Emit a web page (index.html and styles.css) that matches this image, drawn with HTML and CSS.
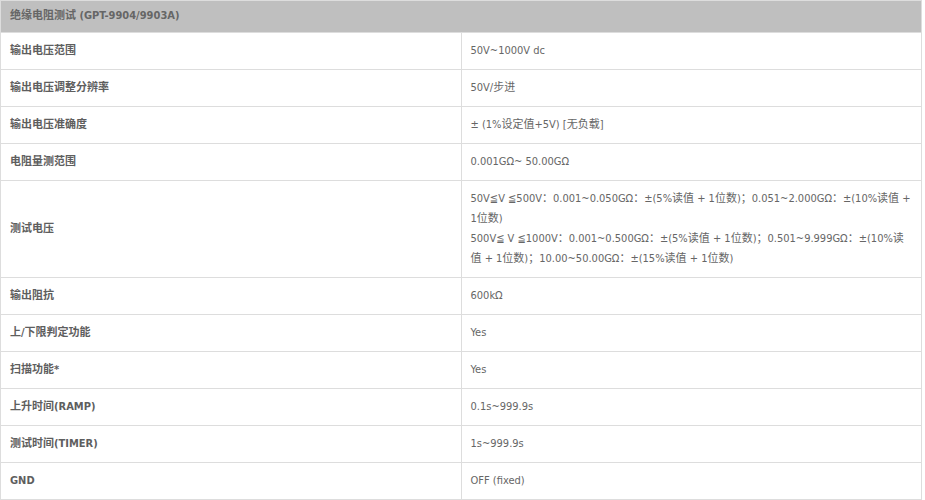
FILE: index.html
```html
<!DOCTYPE html>
<html lang="zh-CN">
<head>
<meta charset="utf-8">
<title>绝缘电阻测试</title>
<link rel="stylesheet" href="styles.css">
</head>
<body>
<table class="spec">
  <thead>
    <tr><th colspan="2" class="head">绝缘电阻测试 (GPT-9904/9903A)</th></tr>
  </thead>
  <tbody>
    <tr><td class="label">输出电压范围</td><td class="value">50V~1000V dc</td></tr>
    <tr><td class="label">输出电压调整分辨率</td><td class="value">50V/步进</td></tr>
    <tr><td class="label">输出电压准确度</td><td class="value">± (1%设定值+5V) [无负载]</td></tr>
    <tr><td class="label">电阻量测范围</td><td class="value">0.001GΩ~ 50.00GΩ</td></tr>
    <tr><td class="label">测试电压</td><td class="value">50V≦V ≦500V<span class="p">：</span>0.001~0.050GΩ<span class="p">：</span>±(5%读值 + 1位数)<span class="p">；</span>0.051~2.000GΩ<span class="p">：</span>±(10%读值 + 1位数)<br>500V≦ V ≦1000V<span class="p">：</span>0.001~0.500GΩ<span class="p">：</span>±(5%读值 + 1位数)<span class="p">；</span>0.501~9.999GΩ<span class="p">：</span>±(10%读值 + 1位数)<span class="p">；</span>10.00~50.00GΩ<span class="p">：</span>±(15%读值 + 1位数)</td></tr>
    <tr><td class="label">输出阻抗</td><td class="value">600kΩ</td></tr>
    <tr><td class="label">上/下限判定功能</td><td class="value">Yes</td></tr>
    <tr><td class="label">扫描功能*</td><td class="value">Yes</td></tr>
    <tr><td class="label">上升时间(RAMP)</td><td class="value">0.1s~999.9s</td></tr>
    <tr><td class="label">测试时间(TIMER)</td><td class="value">1s~999.9s</td></tr>
    <tr><td class="label">GND</td><td class="value">OFF (fixed)</td></tr>
  </tbody>
</table>
</body>
</html>
```
FILE: styles.css
```css
html, body {
  margin: 0;
  padding: 0;
  background: #ffffff;
}
body {
  font-family: "DejaVu Sans Condensed", "DejaVu Sans", "Noto Sans CJK SC", sans-serif;
  font-size: 11px;
  color: #666666;
}
.spec {
  width: 922px;
  border-collapse: collapse;
  table-layout: fixed;
}
.spec th,
.spec td {
  border: 1px solid #dddddd;
  line-height: 20px;
  text-align: left;
  vertical-align: middle;
}
.head {
  background: #bfbfbf;
  font-weight: bold;
  color: #666666;
  padding: 5px 9px 6px;
  border-color: #bfbfbf #dddddd #dddddd #dddddd;
}
.label {
  width: 441px;
  padding: 8px 9px;
  font-weight: bold;
  color: #5e5e5e;
}
.value {
  padding: 8px 9px;
  font-weight: normal;
}
.p {
  font-family: "Noto Sans CJK TC", sans-serif;
  line-height: 1;
}
```
